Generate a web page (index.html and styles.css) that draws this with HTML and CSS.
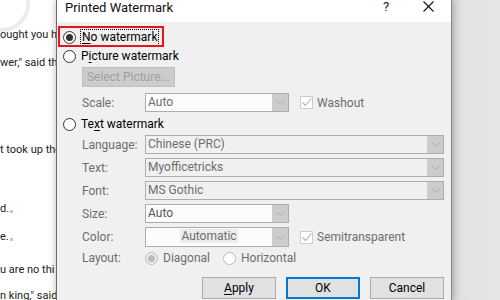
FILE: index.html
```html
<!DOCTYPE html>
<html>
<head>
<meta charset="utf-8">
<link rel="stylesheet" href="styles.css">
</head>
<body>
<div class="screen">
  <div class="doc">
    <svg class="docmark" width="56" height="60" viewBox="0 0 56 60"><circle cx="2" cy="4" r="26" fill="none" stroke="#ececec" stroke-width="4"/></svg>
    <p class="dl" style="margin-top:27px">ought you h</p>
    <p class="dl" style="margin-top:12px">wer," said the</p>
    <p class="dl" style="margin-top:71px">t took up the</p>
    <p class="dl" style="margin-top:43px">d.<span class="pm"></span></p>
    <p class="dl" style="margin-top:12px">e.<span class="pm"></span></p>
    <p class="dl" style="margin-top:17px">u are no thi</p>
    <p class="dl" style="margin-top:10px">n king," said t</p>
  </div>
  <div class="dialog">
    <div class="titlebar">
      <span class="title">Printed Watermark</span>
      <span class="help">?</span>
      <svg class="close" width="11" height="11" viewBox="0 0 11 11"><path d="M0.5 0.5L10.5 10.5M10.5 0.5L0.5 10.5" stroke="#111" stroke-width="1.1"/></svg>
    </div>
    <div class="body">
      <div class="redbox"></div>
      <div class="opt r1"><span class="radio on"></span><span class="focus"><u>N</u>o watermark</span></div>
      <div class="opt r2"><span class="radio"></span><span>P<u>i</u>cture watermark</span></div>
      <div class="sub">
        <div class="selbtn">Select Picture...</div>
        <div class="row scale">
          <span class="lab">Scale:</span>
          <div class="combo short light"><span class="val">Auto</span><span class="arr"><svg width="9" height="5" viewBox="0 0 9 5"><path d="M0.5 0.5L4.5 4.5L8.5 0.5" fill="none" stroke="#a9a9a9"/></svg></span></div>
          <span class="chk"><svg width="10" height="9" viewBox="0 0 10 9"><path d="M0.5 4.5L3.5 7.5L9.5 0.5" fill="none" stroke="#b0b0b0" stroke-width="1.1"/></svg></span>
          <span class="chklab">Washout</span>
        </div>
      </div>
      <div class="opt r3"><span class="radio"></span><span>Te<u>x</u>t watermark</span></div>
      <div class="sub form">
        <div class="row"><span class="lab">Language:</span><div class="combo long"><span class="val">Chinese (PRC)</span><span class="arr"><svg width="9" height="5" viewBox="0 0 9 5"><path d="M0.5 0.5L4.5 4.5L8.5 0.5" fill="none" stroke="#a9a9a9"/></svg></span></div></div>
        <div class="row"><span class="lab">Text:</span><div class="combo long"><span class="val">Myofficetricks</span><span class="arr"><svg width="9" height="5" viewBox="0 0 9 5"><path d="M0.5 0.5L4.5 4.5L8.5 0.5" fill="none" stroke="#a9a9a9"/></svg></span></div></div>
        <div class="row"><span class="lab">Font:</span><div class="combo long"><span class="val">MS Gothic</span><span class="arr"><svg width="9" height="5" viewBox="0 0 9 5"><path d="M0.5 0.5L4.5 4.5L8.5 0.5" fill="none" stroke="#a9a9a9"/></svg></span></div></div>
        <div class="row"><span class="lab">Size:</span><div class="combo short light"><span class="val dark">Auto</span><span class="arr"><svg width="9" height="5" viewBox="0 0 9 5"><path d="M0.5 0.5L4.5 4.5L8.5 0.5" fill="none" stroke="#a9a9a9"/></svg></span></div></div>
        <div class="row color"><span class="lab">Color:</span><div class="combo short light"><span class="val center"><span class="hl">Automatic</span></span><span class="arr"><svg width="9" height="5" viewBox="0 0 9 5"><path d="M0.5 0.5L4.5 4.5L8.5 0.5" fill="none" stroke="#a9a9a9"/></svg></span></div>
          <span class="chk"><svg width="10" height="9" viewBox="0 0 10 9"><path d="M0.5 4.5L3.5 7.5L9.5 0.5" fill="none" stroke="#b0b0b0" stroke-width="1.1"/></svg></span>
          <span class="chklab">Semitransparent</span>
        </div>
        <div class="row layout"><span class="lab">Layout:</span>
          <span class="radio dis on"></span><span class="rl">Diagonal</span>
          <span class="radio dis hz"></span><span class="rl">Horizontal</span>
        </div>
      </div>
      <div class="buttons">
        <div class="btn"><u>A</u>pply</div>
        <div class="btn ok">OK</div>
        <div class="btn">Cancel</div>
      </div>
    </div>
  </div>
  <div class="desk"></div>
</div>
</body>
</html>
```

FILE: styles.css
```css
* { box-sizing: border-box; }
html, body { margin: 0; padding: 0; }
body { width: 500px; height: 300px; overflow: hidden; font-family: Roboto, "Noto Sans", sans-serif; font-size: 12px; color: #000; }
.screen { display: flex; width: 500px; height: 300px; }
.doc { width: 56px; flex: none; background: #fff; overflow: hidden; position: relative; display: flex; flex-direction: column; }
.docmark { position: absolute; left: 0; top: 0; }
.dl { margin: 0; height: 16px; line-height: 16px; white-space: nowrap; font-size: 11px; color: #222; position: relative; }
.pm { display: inline-block; width: 3px; height: 3px; background: #c8c8c8; margin-left: 1px; vertical-align: -1px; }
.dialog { width: 396px; flex: none; border-left: 1px solid #6b6b6b; border-right: 1px solid #8a8a8a; background: #f0f0f0; position: relative; z-index: 1; box-shadow: 0 0 7px rgba(0,0,0,0.28); display: flex; flex-direction: column; }
.titlebar { height: 22px; background: #fff; display: flex; align-items: center; padding-left: 8px; position: relative; }
.title { font-size: 13px; line-height: 14px; margin-top: -6px; color: #111; }
.help { position: absolute; left: 326px; top: 0px; font-size: 13px; line-height: 14px; color: #222; }
.close { position: absolute; left: 366px; top: 1px; }
.body { position: relative; padding: 6px 7px 0 6px; display: flex; flex-direction: column; }
.redbox { position: absolute; left: 1px; top: 4px; width: 106px; height: 21px; border: 2px solid #e8141c; }
.opt { display: flex; align-items: center; height: 18px; color: #000; }
.opt .radio { margin-right: 5px; }
.r2 { margin-top: 1px; }
.r3 { margin-top: 3px; }
.radio { width: 13px; height: 13px; border: 1px solid #333; border-radius: 50%; background: #fff; flex: none; display: flex; align-items: center; justify-content: center; }
.radio.on::after { content: ""; width: 7px; height: 7px; border-radius: 50%; background: #333; }
.radio.dis { border-color: #bcbcbc; }
.radio.dis.on { background: #ececec; }
.radio.dis.on::after { background: #bcbcbc; }
.focus { outline: 1px dotted #000; outline-offset: 0px; padding: 0 1px; line-height: 15px; }
u { text-decoration: underline; text-underline-offset: 2px; }
.sub { padding-left: 19px; display: flex; flex-direction: column; }
.selbtn { margin-top: 2px; width: 93px; height: 20px; background: #cccccc; border: 1px solid #bfbfbf; color: #a0a0a0; display: flex; align-items: center; justify-content: center; }
.row { display: flex; align-items: center; height: 19px; }
.scale { margin-top: 6px; }
.lab { width: 63px; flex: none; color: #6d6d6d; }
.combo { height: 19px; border: 1px solid #adadad; background: #f0f0f0; display: flex; align-items: stretch; }
.combo.light { background: #fcfcfc; }
.combo.short { width: 144px; }
.combo.long { width: 299px; }
.val { flex: 1; padding-left: 2px; color: #6d6d6d; line-height: 17px; white-space: nowrap; }
.val.dark { color: #555; }
.val.center { text-align: center; padding-left: 0; }
.hl { background: #ececec; padding: 0 1px; }
.arr { width: 16px; background: #cccccc; display: flex; align-items: center; justify-content: center; }
.chk { width: 13px; height: 13px; border: 1px solid #cccccc; background: #fff; margin-left: 11px; display: flex; align-items: center; justify-content: center; }
.chklab { margin-left: 4px; color: #6d6d6d; }
.form { margin-top: 2px; gap: 4px; }
.color { height: 20px; }
.color .combo { height: 20px; }
.layout { margin-top: -2px; height: 18px; }
.layout .rl { color: #6d6d6d; margin-left: 5px; }
.radio.hz { margin-left: 13px; }
.buttons { margin-top: 10px; display: flex; justify-content: flex-end; gap: 10px; }
.btn { width: 74px; height: 22px; background: #e1e1e1; border: 1px solid #adadad; display: flex; align-items: center; justify-content: center; color: #000; }
.btn.ok { border: 2px solid #0078d7; }
.desk { flex: 1; background: linear-gradient(to right, #d2d2d2, #e2e2e2 10px, #e6e6e6); }
```
